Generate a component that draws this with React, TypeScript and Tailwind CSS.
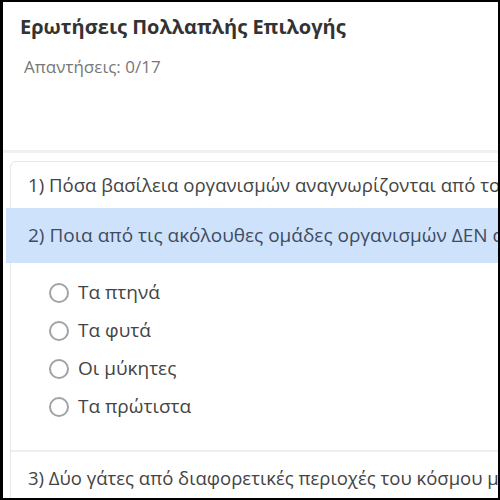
import React from "react";

const options = ["Τα πτηνά", "Τα φυτά", "Οι μύκητες", "Τα πρώτιστα"];

export default function App() {
  return (
    <div className="w-[500px] h-[500px] overflow-hidden bg-black p-[2px] pl-[3px]" style={{ fontFamily: '"Open Sans", "Noto Sans", sans-serif' }}>
      <div className="w-full h-full bg-white overflow-hidden flex flex-col">
        <div className="h-[151px] shrink-0 border-b-[3px] border-[#f0f0f0] px-[17px] pt-[10px]">
          <h1 className="text-[20px] leading-[30px] font-bold text-[#333333] whitespace-nowrap">Ερωτήσεις Πολλαπλής Επιλογής</h1>
          <p className="mt-[13px] text-[17px] leading-[24px] text-[#777777] pl-[4px] whitespace-nowrap">Απαντήσεις: 0/17</p>
        </div>
        <div className="pt-[8px] pl-[4px]">
          <div className="ml-[3px] w-[700px] border border-[#e6e6e6] rounded-tl-[6px]">
            <div className="h-[46px] flex items-center pl-[17px] text-[18.6px] text-[#444444] whitespace-nowrap">
              1) Πόσα βασίλεια οργανισμών αναγνωρίζονται από το σύγχρονο σύστημα ταξινόμησης;
            </div>
            <div className="h-[55px] -ml-[5px] flex items-center pl-[22px] bg-[#cfe2fb] text-[19px] text-[#3e4c5e] whitespace-nowrap">
              2) Ποια από τις ακόλουθες ομάδες οργανισμών ΔΕΝ ανήκει στους ευκαρυωτικούς;
            </div>
            <div className="pl-[38px] pt-[19px] pb-[33px] flex flex-col gap-[17px] border-b-2 border-[#eeeeee]">
              {options.map((o) => (
                <label key={o} className="flex items-center gap-[9px] h-[21px] text-[19px] text-[#444444] whitespace-nowrap">
                  <span className="w-[20px] h-[20px] rounded-full border-2 border-[#a3a3a3] bg-white shrink-0" />
                  <span>{o}</span>
                </label>
              ))}
            </div>
            <div className="h-[52px] flex items-center pl-[17px] text-[18.5px] text-[#444444] whitespace-nowrap">
              3) Δύο γάτες από διαφορετικές περιοχές του κόσμου μπορούν να αναπαραχθούν;
            </div>
          </div>
        </div>
      </div>
    </div>
  );
}
